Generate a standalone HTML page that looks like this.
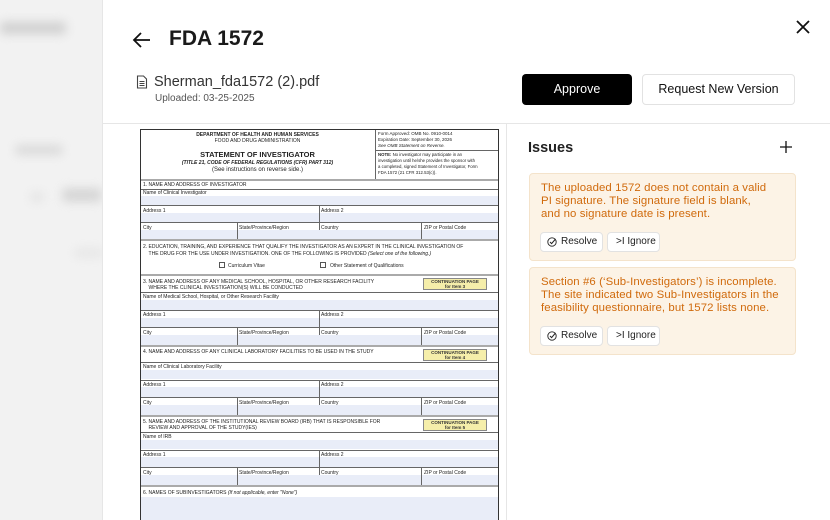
<!DOCTYPE html>
<html><head><meta charset="utf-8"><style>
*{margin:0;padding:0;box-sizing:border-box}
html{width:830px;height:520px;overflow:hidden}
body{width:830px;height:520px;overflow:hidden;position:relative;background:#f2f2f2;font-family:"Liberation Sans",Arial,sans-serif}
.abs{position:absolute}
.blob{position:absolute;background:#cfcfcf;filter:blur(5px);border-radius:4px}
#panel{position:absolute;left:102px;top:0;width:728px;height:520px;background:#fff;border-left:1px solid #e6e6e6}
.f{position:absolute;font-size:5px;color:#222;line-height:6px;white-space:nowrap}
.hl{position:absolute;height:1px;background:#666}
.vl{position:absolute;width:1px;background:#666}
.blue{position:absolute;background:#e9edf8}
.sec{position:absolute;left:141px;width:357px;height:2px;background:#aaa}
.cont{position:absolute;left:423px;width:64px;height:12px;background:#f5eeaa;border:1px solid #888;font-size:4.5px;font-weight:bold;text-align:center;line-height:5px;color:#333}
.card{position:absolute;left:529px;width:267px;background:#fcf3e6;border:1px solid #f4e3cb;border-radius:4px}
.card p{position:absolute;left:11px;top:8px;font-size:11.4px;line-height:13.2px;color:#d06a0c;font-family:"Liberation Sans",sans-serif;letter-spacing:0.1px}
.btn{position:absolute;height:20px;background:#fff;border:1px solid #e2e2e2;border-radius:4px;font-size:10px;color:#222;line-height:18px}
</style></head><body>
<div class="blob" style="left:0;top:22px;width:66px;height:12px"></div>
<div class="blob" style="left:15px;top:145px;width:48px;height:10px;opacity:.7"></div>
<div class="blob" style="left:62px;top:188px;width:40px;height:14px;opacity:.8"></div>
<div class="blob" style="left:30px;top:192px;width:14px;height:10px;opacity:.4"></div>
<div class="blob" style="left:74px;top:248px;width:30px;height:10px;opacity:.3"></div>

<div id="panel"></div>
<svg class="abs" style="left:132px;top:30px" width="20" height="20" viewBox="0 0 20 20"><path d="M18 10H2M9 3L2 10l7 7" fill="none" stroke="#111" stroke-width="1.8"/></svg>
<div class="abs" style="left:169px;top:27px;font-size:21px;font-weight:bold;color:#1a1a1a">FDA 1572</div>
<svg class="abs" style="left:795px;top:19px" width="16" height="16" viewBox="0 0 16 16"><path d="M2 2L14 14M14 2L2 14" stroke="#111" stroke-width="1.8"/></svg>
<svg class="abs" style="left:136px;top:75px" width="12" height="14" viewBox="0 0 12 14"><path d="M1.5 1h6l3 3v9h-9z" fill="none" stroke="#444" stroke-width="1.1"/><path d="M3.5 6.5h5M3.5 8.5h5M3.5 10.5h5" stroke="#444" stroke-width="0.9"/></svg>
<div class="abs" style="left:154px;top:74px;font-size:14.5px;color:#333">Sherman_fda1572 (2).pdf</div>
<div class="abs" style="left:155px;top:93px;font-size:10px;color:#555">Uploaded: 03-25-2025</div>
<div class="abs" style="left:522px;top:74px;width:110px;height:31px;background:#000;border-radius:4px;color:#fff;font-size:12.5px;text-align:center;line-height:31px">Approve</div>
<div class="abs" style="left:642px;top:74px;width:153px;height:31px;background:#fff;border:1px solid #e2e2e2;border-radius:4px;color:#111;font-size:12.5px;text-align:center;line-height:29px">Request New Version</div>
<div class="abs" style="left:103px;top:123px;width:727px;height:1px;background:#e6e6e6"></div>
<div class="abs" style="left:506px;top:124px;width:1px;height:396px;background:#e6e6e6"></div>

<div class="abs" style="left:140px;top:129px;width:359px;height:391px;border:1.5px solid #333;border-bottom:none;background:#fff"></div>
<div class="vl" style="left:375px;top:130px;height:50px"></div>
<div class="hl" style="left:375px;top:150px;width:123px"></div>
<div class="f" style="left:140px;top:132px;width:235px;text-align:center;font-weight:bold">DEPARTMENT OF HEALTH AND HUMAN SERVICES</div>
<div class="f" style="left:140px;top:138px;width:235px;text-align:center">FOOD AND DRUG ADMINISTRATION</div>
<div class="f" style="left:140px;top:151px;width:235px;text-align:center;font-weight:bold;font-size:7.5px;line-height:8px">STATEMENT OF INVESTIGATOR</div>
<div class="f" style="left:140px;top:160px;width:235px;text-align:center;font-weight:bold;font-style:italic">(TITLE 21, CODE OF FEDERAL REGULATIONS (CFR) PART 312)</div>
<div class="f" style="left:140px;top:167px;width:235px;text-align:center;font-size:6px">(See instructions on reverse side.)</div>
<div class="f" style="left:378px;top:131px;font-size:4.5px;line-height:6px">Form Approved: OMB No. 0910-0014<br>Expiration Date: September 30, 2026<br><i>See OMB Statement on Reverse.</i></div>
<div class="f" style="left:378px;top:152px;font-size:4.3px;line-height:6px"><b>NOTE:</b> No investigator may participate in an<br>investigation until he/she provides the sponsor with<br>a completed, signed Statement of Investigator, Form<br>FDA 1572 (21 CFR 312.53(c)).</div>

<div class="sec" style="top:179px"></div>
<div class="f" style="left:143px;top:182px">1. NAME AND ADDRESS OF INVESTIGATOR</div>
<div class="hl" style="left:141px;top:189px;width:357px"></div>
<div class="f" style="left:143px;top:190px">Name of Clinical Investigator</div>
<div class="blue" style="left:141px;top:196px;width:357px;height:9px"></div>
<div class="hl" style="left:141px;top:205px;width:357px"></div>
<div class="f" style="left:143px;top:208px">Address 1</div><div class="f" style="left:321px;top:208px">Address 2</div>
<div class="blue" style="left:141px;top:213px;width:357px;height:9px"></div>
<div class="vl" style="left:319px;top:205px;height:34px"></div>
<div class="hl" style="left:141px;top:222px;width:357px"></div>
<div class="f" style="left:143px;top:225px">City</div><div class="f" style="left:239px;top:225px">State/Province/Region</div><div class="f" style="left:321px;top:225px">Country</div><div class="f" style="left:424px;top:225px">ZIP or Postal Code</div>
<div class="blue" style="left:141px;top:230px;width:357px;height:9px"></div>
<div class="vl" style="left:237px;top:222px;height:17px"></div><div class="vl" style="left:421px;top:222px;height:17px"></div>
<div class="sec" style="top:239px"></div>
<div class="f" style="left:143px;top:244px;line-height:7px">2. EDUCATION, TRAINING, AND EXPERIENCE THAT QUALIFY THE INVESTIGATOR AS AN EXPERT IN THE CLINICAL INVESTIGATION OF<br>&nbsp;&nbsp;&nbsp;&nbsp;THE DRUG FOR THE USE UNDER INVESTIGATION. ONE OF THE FOLLOWING IS PROVIDED <i>(Select one of the following.)</i></div>
<div class="abs" style="left:219px;top:262px;width:6px;height:6px;border:0.7px solid #555"></div>
<div class="f" style="left:228px;top:263px">Curriculum Vitae</div>
<div class="abs" style="left:320px;top:262px;width:6px;height:6px;border:0.7px solid #555"></div>
<div class="f" style="left:330px;top:263px">Other Statement of Qualifications</div>

<div class="sec" style="top:274px"></div>
<div class="f" style="left:143px;top:279px;line-height:6px">3. NAME AND ADDRESS OF ANY MEDICAL SCHOOL, HOSPITAL, OR OTHER RESEARCH FACILITY<br>&nbsp;&nbsp;&nbsp;&nbsp;WHERE THE CLINICAL INVESTIGATION(S) WILL BE CONDUCTED</div>
<div class="cont" style="top:278px">CONTINUATION PAGE<br>for Item 3</div>
<div class="hl" style="left:141px;top:292px;width:357px"></div>
<div class="f" style="left:143px;top:294px">Name of Medical School, Hospital, or Other Research Facility</div>
<div class="blue" style="left:141px;top:300px;width:357px;height:10px"></div>
<div class="hl" style="left:141px;top:310px;width:357px"></div>
<div class="f" style="left:143px;top:312px">Address 1</div><div class="f" style="left:321px;top:312px">Address 2</div>
<div class="blue" style="left:141px;top:318px;width:357px;height:9px"></div>
<div class="vl" style="left:319px;top:310px;height:35px"></div>
<div class="hl" style="left:141px;top:327px;width:357px"></div>
<div class="f" style="left:143px;top:330px">City</div><div class="f" style="left:239px;top:330px">State/Province/Region</div><div class="f" style="left:321px;top:330px">Country</div><div class="f" style="left:424px;top:330px">ZIP or Postal Code</div>
<div class="blue" style="left:141px;top:335px;width:357px;height:10px"></div>
<div class="vl" style="left:237px;top:327px;height:18px"></div><div class="vl" style="left:421px;top:327px;height:18px"></div>

<div class="sec" style="top:345px"></div>
<div class="f" style="left:143px;top:349px">4. NAME AND ADDRESS OF ANY CLINICAL LABORATORY FACILITIES TO BE USED IN THE STUDY</div>
<div class="cont" style="top:349px">CONTINUATION PAGE<br>for Item 4</div>
<div class="hl" style="left:141px;top:362px;width:357px"></div>
<div class="f" style="left:143px;top:364px">Name of Clinical Laboratory Facility</div>
<div class="blue" style="left:141px;top:370px;width:357px;height:9px"></div>
<div class="hl" style="left:141px;top:380px;width:357px"></div>
<div class="f" style="left:143px;top:382px">Address 1</div><div class="f" style="left:321px;top:382px">Address 2</div>
<div class="blue" style="left:141px;top:387px;width:357px;height:10px"></div>
<div class="vl" style="left:319px;top:380px;height:35px"></div>
<div class="hl" style="left:141px;top:397px;width:357px"></div>
<div class="f" style="left:143px;top:400px">City</div><div class="f" style="left:239px;top:400px">State/Province/Region</div><div class="f" style="left:321px;top:400px">Country</div><div class="f" style="left:424px;top:400px">ZIP or Postal Code</div>
<div class="blue" style="left:141px;top:405px;width:357px;height:10px"></div>
<div class="vl" style="left:237px;top:397px;height:18px"></div><div class="vl" style="left:421px;top:397px;height:18px"></div>

<div class="sec" style="top:415px"></div>
<div class="f" style="left:143px;top:420px;line-height:5.5px">5. NAME AND ADDRESS OF THE INSTITUTIONAL REVIEW BOARD (IRB) THAT IS RESPONSIBLE FOR<br>&nbsp;&nbsp;&nbsp;&nbsp;REVIEW AND APPROVAL OF THE STUDY(IES)</div>
<div class="cont" style="top:419px">CONTINUATION PAGE<br>for Item 5</div>
<div class="hl" style="left:141px;top:432px;width:357px"></div>
<div class="f" style="left:143px;top:434px">Name of IRB</div>
<div class="blue" style="left:141px;top:440px;width:357px;height:9px"></div>
<div class="hl" style="left:141px;top:450px;width:357px"></div>
<div class="f" style="left:143px;top:452px">Address 1</div><div class="f" style="left:321px;top:452px">Address 2</div>
<div class="blue" style="left:141px;top:457px;width:357px;height:10px"></div>
<div class="vl" style="left:319px;top:450px;height:35px"></div>
<div class="hl" style="left:141px;top:467px;width:357px"></div>
<div class="f" style="left:143px;top:470px">City</div><div class="f" style="left:239px;top:470px">State/Province/Region</div><div class="f" style="left:321px;top:470px">Country</div><div class="f" style="left:424px;top:470px">ZIP or Postal Code</div>
<div class="blue" style="left:141px;top:475px;width:357px;height:10px"></div>
<div class="vl" style="left:237px;top:467px;height:18px"></div><div class="vl" style="left:421px;top:467px;height:18px"></div>
<div class="sec" style="top:485px"></div>
<div class="f" style="left:143px;top:490px">6. NAMES OF SUBINVESTIGATORS <i>(If not applicable, enter "None")</i></div>
<div class="blue" style="left:141px;top:497px;width:357px;height:23px"></div>

<div class="abs" style="left:528px;top:140px;font-size:14.5px;font-weight:bold;color:#222">Issues</div>
<svg class="abs" style="left:780px;top:141px" width="12" height="12" viewBox="0 0 12 12"><path d="M6 0V12M0 6H12" stroke="#111" stroke-width="1.3"/></svg>

<div class="card" style="top:173px;height:88px">
<p>The uploaded 1572 does not contain a valid<br>PI signature. The signature field is blank,<br>and no signature date is present.</p>
<div class="btn" style="left:10px;top:58px;width:63px"><svg class="abs" style="left:6px;top:4px" width="10" height="10" viewBox="0 0 10 10"><circle cx="5" cy="5" r="4.2" fill="none" stroke="#222" stroke-width="0.9"/><path d="M3 5l1.6 1.6L8.5 2" fill="none" stroke="#222" stroke-width="1"/></svg><span class="abs" style="left:20px;top:0">Resolve</span></div>
<div class="btn" style="left:77px;top:58px;width:53px"><span class="abs" style="left:8px;top:0">&gt;I&nbsp;Ignore</span></div>
</div>
<div class="card" style="top:267px;height:88px">
<p>Section #6 (‘Sub-Investigators’) is incomplete.<br>The site indicated two Sub-Investigators in the<br>feasibility questionnaire, but 1572 lists none.</p>
<div class="btn" style="left:10px;top:58px;width:63px"><svg class="abs" style="left:6px;top:4px" width="10" height="10" viewBox="0 0 10 10"><circle cx="5" cy="5" r="4.2" fill="none" stroke="#222" stroke-width="0.9"/><path d="M3 5l1.6 1.6L8.5 2" fill="none" stroke="#222" stroke-width="1"/></svg><span class="abs" style="left:20px;top:0">Resolve</span></div>
<div class="btn" style="left:77px;top:58px;width:53px"><span class="abs" style="left:8px;top:0">&gt;I&nbsp;Ignore</span></div>
</div>
</body></html>
